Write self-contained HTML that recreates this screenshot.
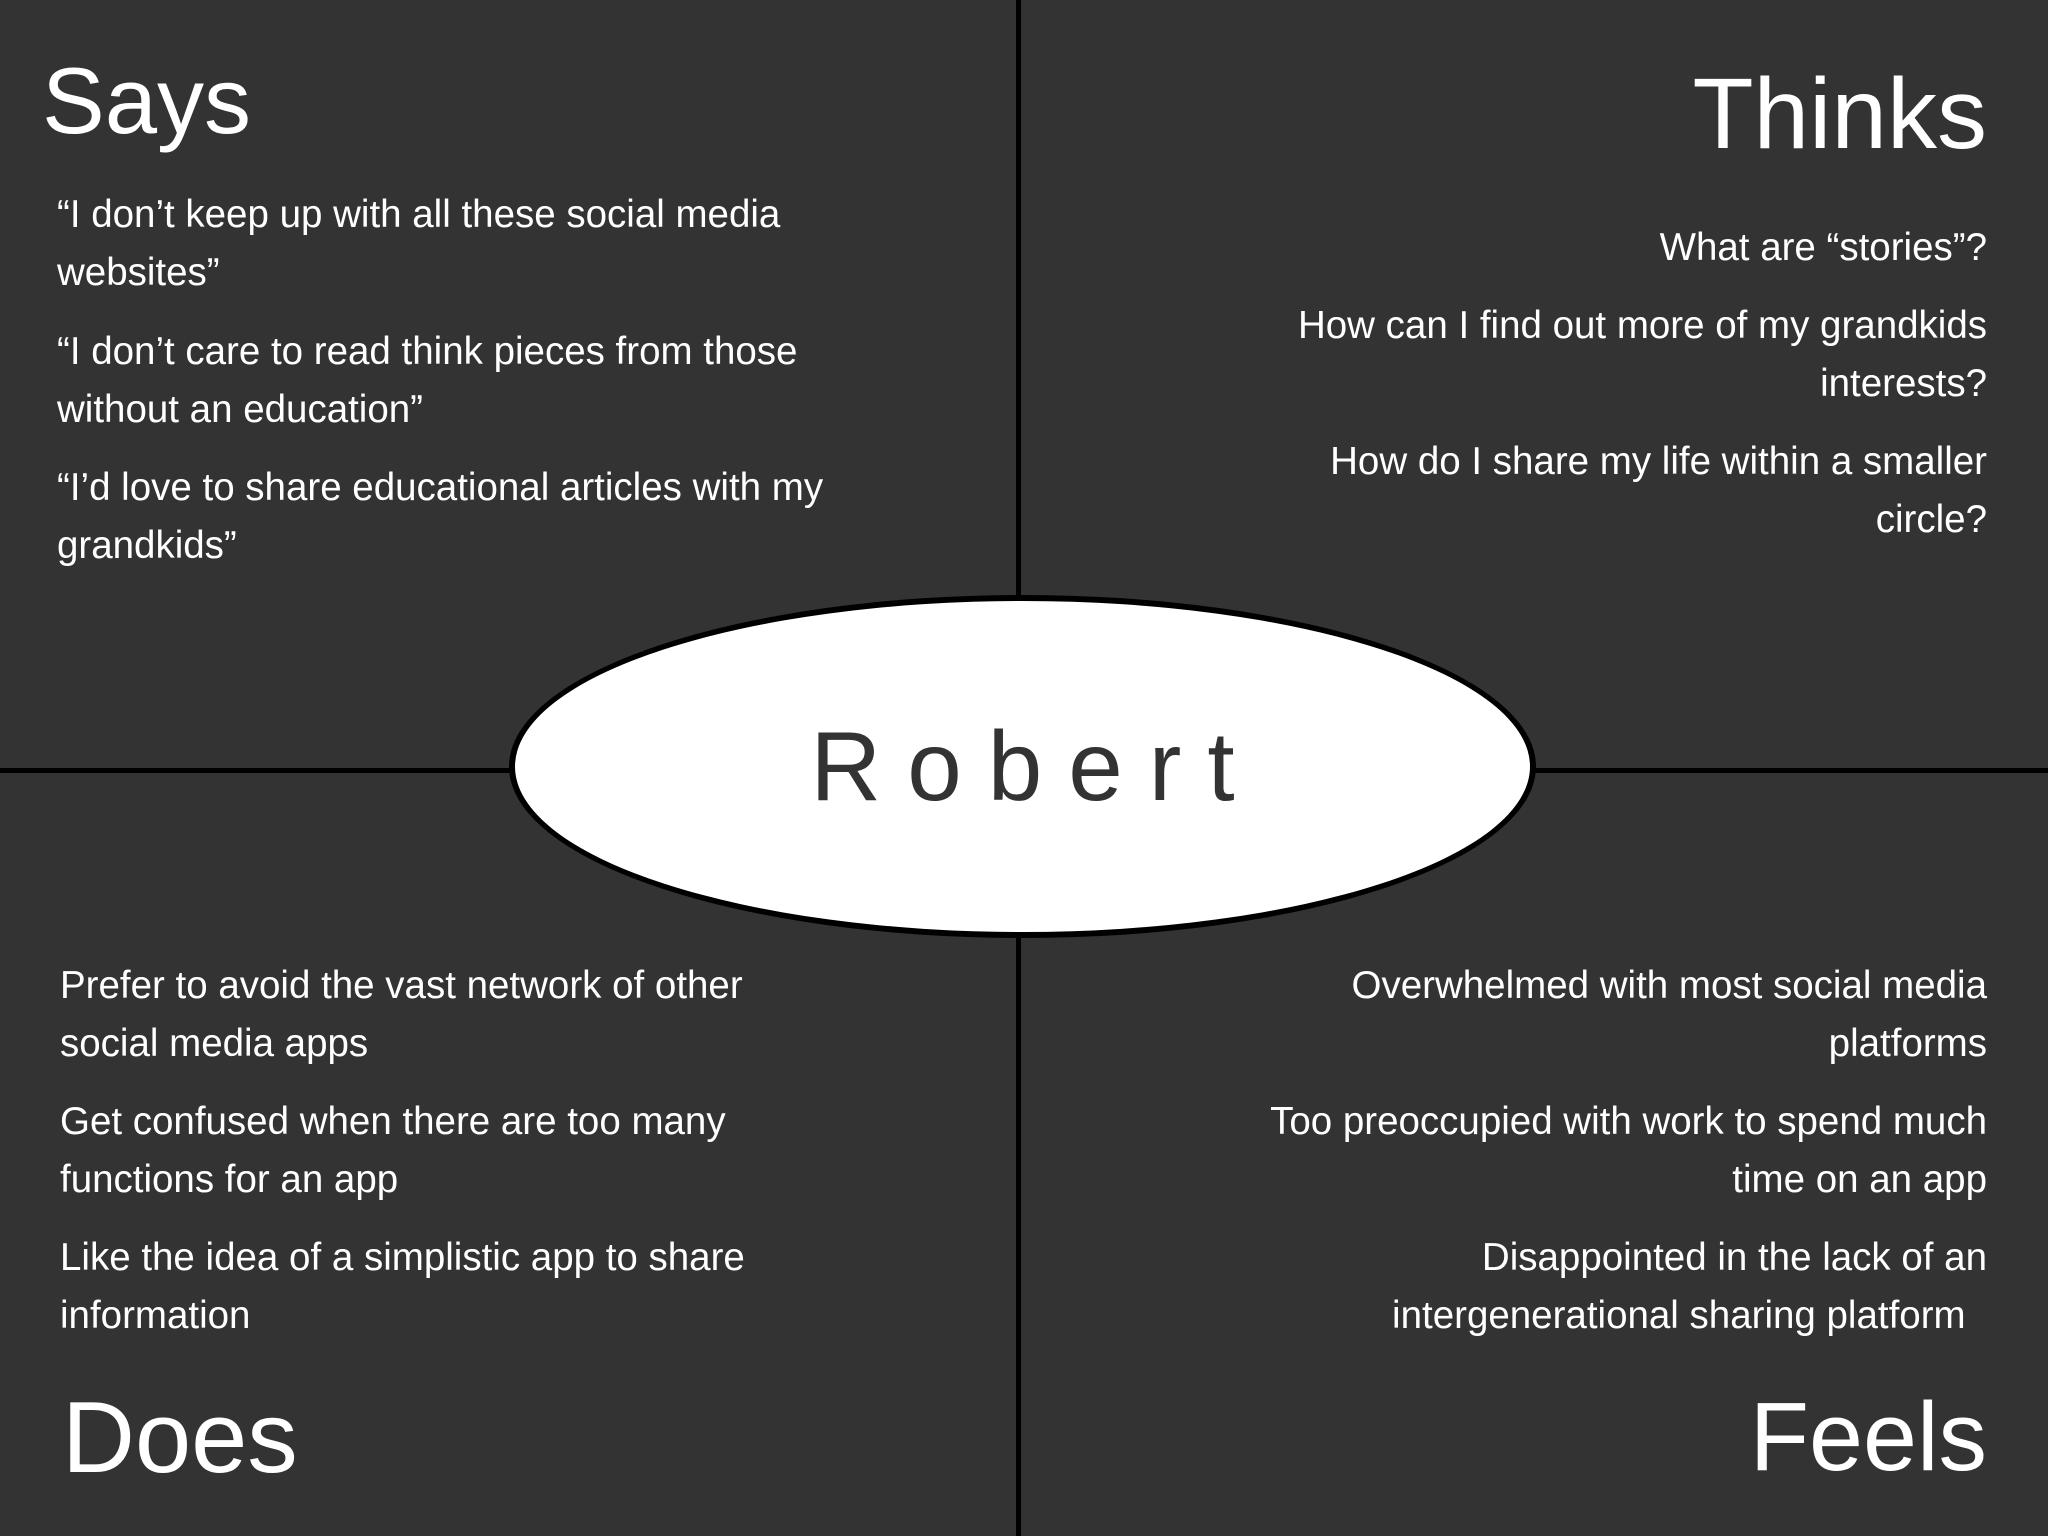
<!DOCTYPE html>
<html><head><meta charset="utf-8"><style>
html,body{margin:0;padding:0}
body{width:2048px;height:1536px;background:#333333;position:relative;overflow:hidden;font-family:"Liberation Sans",sans-serif;color:#fff}
.v{position:absolute;left:1016px;top:0;width:5px;height:1536px;background:#000}
.h{position:absolute;left:0;top:768px;width:2048px;height:5px;background:#000}
.ell{position:absolute;left:509px;top:595px;width:1027px;height:343px;box-sizing:border-box;border:6px solid #000;border-radius:50%;background:#fff}
.robert{position:absolute;left:509px;top:595px;width:1027px;height:343px;display:flex;align-items:center;justify-content:center;color:#333;font-size:98px;letter-spacing:26px;padding-left:26px;box-sizing:border-box}
.hd{position:absolute;line-height:1;white-space:nowrap}
.p{position:absolute;font-size:38.5px;line-height:58px;width:850px}
.l{left:57px;text-align:left}
.r{right:61px;text-align:right}
</style></head><body>
<div class="v"></div><div class="h"></div>
<div class="ell"></div><div class="robert">Robert</div>

<div class="hd" style="left:42px;top:54px;font-size:94px">Says</div>
<div class="hd" style="right:61px;top:64px;font-size:100px">Thinks</div>
<div class="hd" style="left:62px;top:1388px;font-size:101px">Does</div>
<div class="hd" style="right:61px;top:1388px;font-size:97px">Feels</div>

<div class="p l" style="top:186px">“I don’t keep up with all these social media<br>websites”</div>
<div class="p l" style="top:323px">“I don’t care to read think pieces from those<br>without an education”</div>
<div class="p l" style="top:459px">“I’d love to share educational articles with my<br>grandkids”</div>

<div class="p r" style="top:219px">What are “stories”?</div>
<div class="p r" style="top:297px">How can I find out more of my grandkids<br>interests?</div>
<div class="p r" style="top:433px">How do I share my life within a smaller<br>circle?</div>

<div class="p l" style="top:957px;left:60px">Prefer to avoid the vast network of other<br>social media apps</div>
<div class="p l" style="top:1093px;left:60px">Get confused when there are too many<br>functions for an app</div>
<div class="p l" style="top:1229px;left:60px">Like the idea of a simplistic app to share<br>information</div>

<div class="p r" style="top:957px">Overwhelmed with most social media<br>platforms</div>
<div class="p r" style="top:1093px">Too preoccupied with work to spend much<br>time on an app</div>
<div class="p r" style="top:1229px">Disappointed in the lack of an<br>intergenerational sharing platform&nbsp;&nbsp;</div>
</body></html>
